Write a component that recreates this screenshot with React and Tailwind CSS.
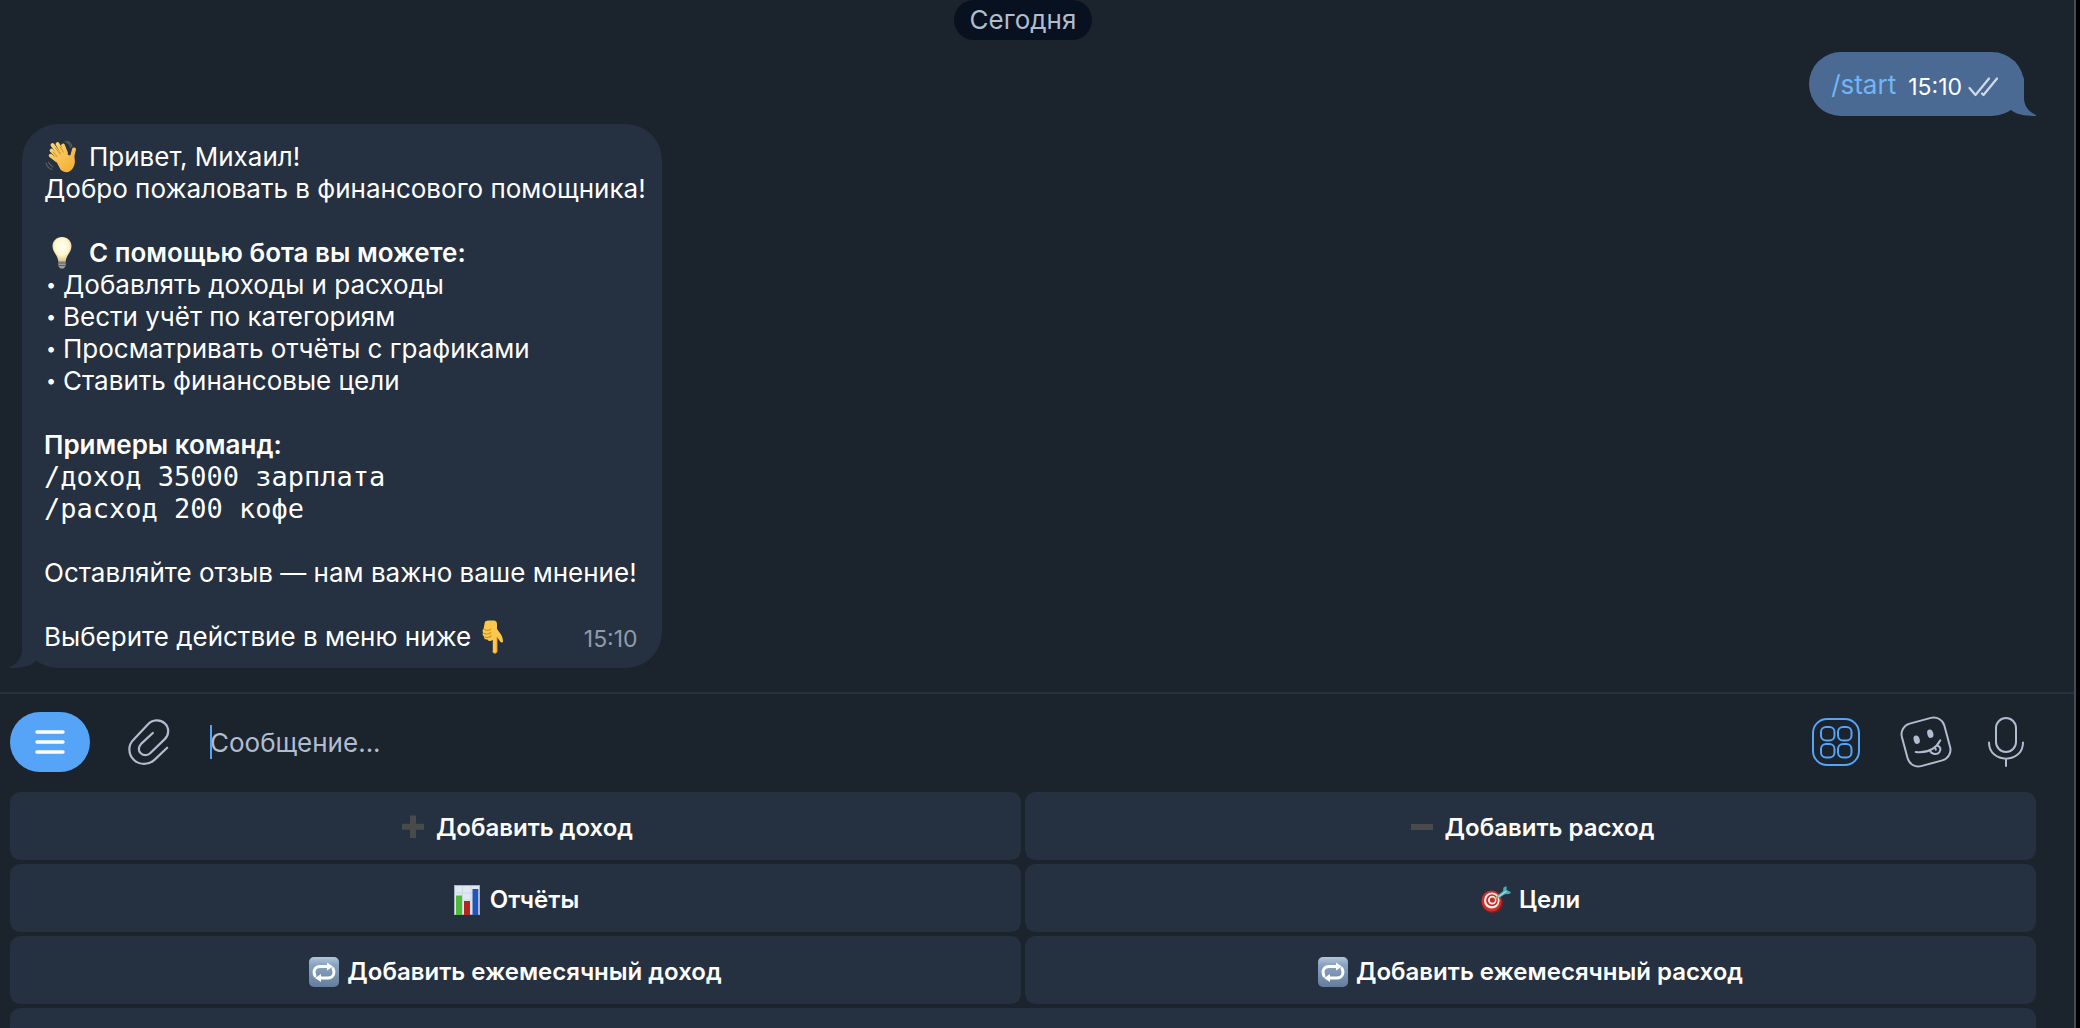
const commands = ['Добавлять доходы и расходы', 'Вести учёт по категориям', 'Просматривать отчёты с графиками', 'Ставить финансовые цели'];

function WaveIcon() {
  return (
    <svg viewBox="0 0 34 34" className="w-[34px] h-[34px] shrink-0" aria-hidden="true">
      <defs>
        <linearGradient id="skin" x1="0" y1="0" x2="34" y2="34" gradientUnits="userSpaceOnUse">
          <stop offset="0" stopColor="#ffe07a" />
          <stop offset="1" stopColor="#f2a62c" />
        </linearGradient>
      </defs>
      <g fill="none" stroke="url(#skin)" strokeWidth="3.800" strokeLinecap="round">
        <path d="M14 17 7.500 10.500" />
        <path d="M16 15 8.500 5" />
        <path d="M19 13 13.500 4" />
        <path d="M22 13 19 5.500" />
        <path d="M13 20.500 6.500 15.500" strokeWidth="3.500" />
        <path d="M27.500 19 30 9.500" strokeWidth="4" />
      </g>
      <path d="M10.500 18 20 10.500l5 5 4.800-1.500c1 5 2.200 9-.8 14-3 5-8 5.500-12.500 1.500z" fill="url(#skin)" />
      <path d="M13.500 17 9 11.800M16.500 14.500 11 7.500M19.500 12.500 15.800 6.500" stroke="#c97a17" strokeWidth=".8" fill="none" />
      <g fill="none" stroke="#5f5b55" strokeWidth="1.100" strokeLinecap="round">
        <path d="M21 1.500c3 1 5 3 5.500 6M23.500 1c2.500 1.500 4 3.500 4.500 6M2 23c.8 3 3 5.500 6 6.500M4.500 22c.6 2 2 3.800 4.500 5" />
      </g>
    </svg>
  );
}

function BulbIcon() {
  return (
    <svg viewBox="0 0 34 34" className="w-[34px] h-[34px] shrink-0" aria-hidden="true">
      <defs>
        <radialGradient id="glow" cx=".5" cy=".4" r=".6">
          <stop offset="0" stopColor="#fffef4" />
          <stop offset=".6" stopColor="#fff6cf" />
          <stop offset="1" stopColor="#d9c88a" />
        </radialGradient>
      </defs>
      <path d="M18 1c5.500 0 9.500 4 9.500 9.200 0 5.800-5 8.300-5.700 14.800h-7.600c-.7-6.500-5.700-9-5.700-14.800C8.500 5 12.500 1 18 1z" fill="url(#glow)" />
      <path d="M14.300 25h7.400v5l-2 2.500h-3.400l-2-2.500z" fill="#9c9c9c" />
      <path d="M14.300 27h7.400M14.300 29.500h7.400" stroke="#5d5d5d" strokeWidth="1" />
    </svg>
  );
}

function PointDownIcon() {
  return (
    <svg viewBox="0 0 34 34" className="w-[34px] h-[34px] shrink-0" aria-hidden="true">
      <path d="M9.500 4c0-2.500 1.500-3.500 4-3.500h5c2.500 0 3.500 1.500 3.500 3.500v5l4 5.500c1.200 1.800 1.800 4 2 6.500.1 1.800-1.700 2-2.700.8L22 17v14c0 3-4.200 3-4.200 0V20c-3 1.500-5 1-5.300-.5-2.500.3-3.800-1.200-3.500-3-1.500-1-1.700-2.500-1-4-.7-1.200-.5-2.800.6-3.800z" fill="#fcc84b" />
      <path d="M9 9c2 1.500 5 1.500 7 0M8.500 13c2 1.500 5.500 1.500 7.500-.5M9.500 17c2.500 1 5 .5 7-1.500" fill="none" stroke="#d48b20" strokeWidth="1.100" />
      <path d="M22 17v14c0 3-4.200 3-4.200 0" fill="none" stroke="#e09a28" strokeWidth="1" />
    </svg>
  );
}

function PlusIcon() {
  return (
    <svg viewBox="0 0 30 30" className="w-[30px] h-[30px] shrink-0" aria-hidden="true">
      <path d="M12 2.500h6v8.200h8v6h-8v8.300h-6v-8.300H4v-6h8z" fill="#4a4a4a" />
    </svg>
  );
}

function MinusIcon() {
  return (
    <svg viewBox="0 0 30 30" className="w-[30px] h-[30px] shrink-0" aria-hidden="true">
      <path d="M4 11h22v6H4z" fill="#4a4a4a" />
    </svg>
  );
}

function ChartIcon() {
  return (
    <svg viewBox="0 0 30 30" className="w-[30px] h-[30px] shrink-0" aria-hidden="true">
      <path d="M2 0h26v30H2z" fill="#a9b3c0" />
      <path d="M3 1h24v28H3z" fill="#e0e8f2" />
      <path d="M10.500 1v28M19 1v28M3 8h24M3 15h24" stroke="#cdd7e4" strokeWidth="1" />
      <path d="M4 10.500h6V30H4z" fill="#4fb93c" />
      <path d="M12 16h6v14h-6z" fill="#b3261d" />
      <path d="M20.500 4h5.800v26h-5.800z" fill="#2355b8" />
    </svg>
  );
}

function TargetIcon() {
  return (
    <svg viewBox="0 0 30 30" className="w-[30px] h-[30px] shrink-0" aria-hidden="true">
      <ellipse cx="11.500" cy="17.500" rx="10.500" ry="10.500" fill="#8f1c18" />
      <ellipse cx="10.500" cy="16" rx="10" ry="10.500" fill="#cf2f28" />
      <ellipse cx="10.800" cy="15.500" rx="7.800" ry="8" fill="#f4eeee" />
      <ellipse cx="11" cy="15.300" rx="5.800" ry="6" fill="#c22b25" />
      <ellipse cx="11.200" cy="15.200" rx="4.200" ry="4.400" fill="#f4eeee" />
      <ellipse cx="11.400" cy="15" rx="2.500" ry="2.600" fill="#c22b25" />
      <path d="m14 13.500 4.500-3" stroke="#e8b23a" strokeWidth="1.600" />
      <path d="m15.500 11.500 6.500-5.500.5-3.500L25.500 1l.2 4L30 7l-1.500 2-4.500.2-7.500 4.600z" fill="#4fa9b5" />
      <path d="m17 12 8.500-6" stroke="#9be0e4" strokeWidth="1.400" />
    </svg>
  );
}

function RepeatIcon() {
  return (
    <svg viewBox="0 0 30 30" className="w-[30px] h-[30px] shrink-0" aria-hidden="true">
      <defs>
        <linearGradient id="tile" x1="0" y1="0" x2="0" y2="1">
          <stop offset="0" stopColor="#b4c6da" />
          <stop offset=".25" stopColor="#8aa4c4" />
          <stop offset="1" stopColor="#647d9b" />
        </linearGradient>
      </defs>
      <rect width="30" height="30" rx="5" fill="url(#tile)" />
      <path d="M6 19c-2.500-5 0-9.500 5-9.500h8M24 11.500c2.500 5 0 9.500-5 9.500h-8" fill="none" stroke="#fff" strokeWidth="2.800" strokeLinecap="round" />
      <path d="m18 5.500 6 4-6 4zM12 17l-6 4 6 4z" fill="#fff" />
    </svg>
  );
}

function ClipIcon() {
  return (
    <svg viewBox="0 0 44 50" className="w-[42px] h-[48px]" fill="none" stroke="#b0bccf" strokeWidth="2.300" strokeLinecap="round" strokeLinejoin="round" aria-hidden="true">
      <path d="M41 31 28 43.500C21.500 49.500 12 49.500 6 43.500S0 28.500 5.500 23L21 6.500C25.500 1.500 33.500 1 38.500 5.500s4.500 12.500 0 16.500L23.500 36.500c-3 3-7.300 3-10.100.3s-2.700-6.800.3-9.800L26 15.500" />
    </svg>
  );
}

function KeyboardIcon() {
  return (
    <svg viewBox="0 0 48 48" className="w-[48px] h-[48px]" fill="none" stroke="#56a4f8" strokeWidth="2" aria-hidden="true">
      <rect x="1" y="1" width="46" height="46" rx="14" />
      <rect x="9" y="9" width="13.500" height="13.500" rx="5" />
      <rect x="26" y="9" width="13.500" height="13.500" rx="5" />
      <rect x="9" y="26" width="13.500" height="13.500" rx="5" />
      <rect x="26" y="26" width="13.500" height="13.500" rx="5" />
    </svg>
  );
}

function StickerIcon() {
  return (
    <svg viewBox="0 0 52 52" className="w-[52px] h-[52px]" fill="none" stroke="#b0bccf" strokeWidth="2" strokeLinecap="round" aria-hidden="true">
      <rect x="4" y="4" width="44" height="44" rx="11" transform="rotate(-15 26 26)" />
      <ellipse cx="16.700" cy="23.700" rx="3" ry="4.300" transform="rotate(-15 16.700 23.700)" fill="#b0bccf" stroke="none" />
      <ellipse cx="30.300" cy="17.700" rx="3" ry="4.300" transform="rotate(-15 30.300 17.700)" fill="#b0bccf" stroke="none" />
      <path d="M15.700 36c9 1 19-1 24.600-11.700" />
      <path d="M30 34.500c1.500 4.500 7.500 4.500 9.500 1.500 1.800-2.700 1-5.500-2.500-6.500M35 31.500l.8 2.200" />
    </svg>
  );
}

function MicIcon() {
  return (
    <svg viewBox="0 0 36 50" className="w-[36px] h-[50px]" fill="none" stroke="#b0bccf" strokeWidth="2" strokeLinecap="round" aria-hidden="true">
      <rect x="8" y="1" width="20" height="34" rx="10" />
      <path d="M1 25.500c0 21.500 34 21.500 34 0M18 42v7" />
    </svg>
  );
}

function KeyButton({ icon, children }) {
  return (
    <button type="button" className="h-[68px] pt-[3px] rounded-[10px] bg-[#253040] flex items-center justify-center gap-2 text-2xl font-semibold text-white">
      {icon}
      {children}
    </button>
  );
}

export default function App() {
  return (
    <div className="h-screen bg-black pr-[4px] font-['Inter',sans-serif] overflow-hidden">
      <div className="h-full flex flex-col bg-[#1b232c] border-r-2 border-[#484c52] overflow-hidden">
        <main className="flex-1 min-h-0 overflow-hidden flex flex-col justify-end pl-[22px] pr-[50px] pb-6 text-[26px] leading-[32px] text-white">
          <div className="self-center shrink-0 rounded-full bg-[#08111f] px-4 py-1 mb-3 text-[#b0bccf]">Сегодня</div>

          <div className="relative self-end shrink-0 h-[64px] mb-2 rounded-[32px] bg-[#4a6a94] pl-[22px] pr-[26px] pt-[2px] flex items-center gap-3">
            <a href="#start" className="text-[#74b5f5]">/start</a>
            <span className="flex items-center gap-[6px] text-[23px] pt-1">
              15:10
              <svg viewBox="0 0 30 20" className="w-[30px] h-[20px]" fill="none" stroke="#cfdbe9" strokeWidth="2.200" strokeLinecap="round" strokeLinejoin="round" aria-hidden="true">
                <path d="m1.500 11 6 7L21 1.500M14 16.500l1.500 1.500L29 1.500" />
              </svg>
            </span>
            <svg viewBox="0 0 28 40" className="absolute right-[-12px] bottom-0 w-[28px] h-[40px]" fill="#4a6a94" aria-hidden="true">
              <path d="M4 8c6 0 12-4 12-8v22c0 8 5 14 12 17v1c-10 0-20-1-26-7z" />
            </svg>
          </div>

          <div className="relative self-start shrink-0 rounded-[36px] bg-[#253040] pl-[22px] pr-4 pt-[17px] pb-[15px]">
            <p className="flex items-center gap-[11px] h-8"><WaveIcon /> Привет, Михаил!</p>
            <p>Добро пожаловать в финансового помощника!</p>
            <p className="flex items-center gap-[11px] h-8 mt-8 font-semibold"><BulbIcon /> С помощью бота вы можете:</p>
            {commands.map((item) => (
              <p key={item} className="flex items-center h-8">
                <span className="w-[19px] pl-[2px] text-lg">•</span>
                {item}
              </p>
            ))}
            <p className="mt-8 font-semibold">Примеры команд:</p>
            <p className="font-['DejaVu_Sans_Mono',monospace] text-[27px] leading-[32px]">/доход 35000 зарплата</p>
            <p className="font-['DejaVu_Sans_Mono',monospace] text-[27px] leading-[32px]">/расход 200 кофе</p>
            <p className="mt-8">Оставляйте отзыв — нам важно ваше мнение!</p>
            <p className="flex items-center gap-1 h-8 mt-8 pr-2">
              Выберите действие в меню ниже <PointDownIcon />
              <span className="ml-auto pt-1 text-[23px] text-[#8f9bae]">15:10</span>
            </p>
            <svg viewBox="0 0 28 40" className="absolute left-[-12px] bottom-0 w-[28px] h-[40px]" fill="#253040" aria-hidden="true">
              <path d="M28 0H12v22c0 8-5 14-12 17v1c10 0 20-1 26-7z" />
            </svg>
          </div>
        </main>

        <form className="shrink-0 h-[100px] border-t-2 border-[#253040] flex items-center pl-[10px] pr-[50px] pb-[2px]">
          <button type="button" aria-label="Меню" className="w-[80px] h-[60px] rounded-[30px] bg-[#56a4f8] flex items-center justify-center">
            <svg viewBox="0 0 30 24" className="w-[30px] h-[24px]" stroke="#fff" strokeWidth="3.400" strokeLinecap="round" aria-hidden="true">
              <path d="M2 2h26M2 12h26M2 22h26" />
            </svg>
          </button>
          <button type="button" aria-label="Прикрепить файл" className="ml-[38px]"><ClipIcon /></button>
          <div className="relative ml-10 flex-1 flex items-center">
            <input type="text" aria-label="Сообщение" placeholder="Сообщение..." className="w-full pt-[2px] bg-transparent outline-none text-[26px] leading-[32px] text-white placeholder:text-[#b0bccf]" />
            <span className="absolute left-0 inset-y-0 w-[2px] bg-[#56a4f8]"></span>
          </div>
          <button type="button" aria-label="Клавиатура бота"><KeyboardIcon /></button>
          <button type="button" aria-label="Стикеры" className="ml-10"><StickerIcon /></button>
          <button type="button" aria-label="Голосовое сообщение" className="ml-9"><MicIcon /></button>
        </form>

        <div className="shrink-0 h-[236px] overflow-hidden grid grid-cols-2 auto-rows-[68px] gap-1 pl-[10px] pr-[38px]">
          <KeyButton icon={<PlusIcon />}>Добавить доход</KeyButton>
          <KeyButton icon={<MinusIcon />}>Добавить расход</KeyButton>
          <KeyButton icon={<ChartIcon />}>Отчёты</KeyButton>
          <KeyButton icon={<TargetIcon />}>Цели</KeyButton>
          <KeyButton icon={<RepeatIcon />}>Добавить ежемесячный доход</KeyButton>
          <KeyButton icon={<RepeatIcon />}>Добавить ежемесячный расход</KeyButton>
          <button type="button" aria-label="Ещё" className="col-span-2 rounded-[10px] bg-[#253040]" />
        </div>
      </div>
    </div>
  );
}
